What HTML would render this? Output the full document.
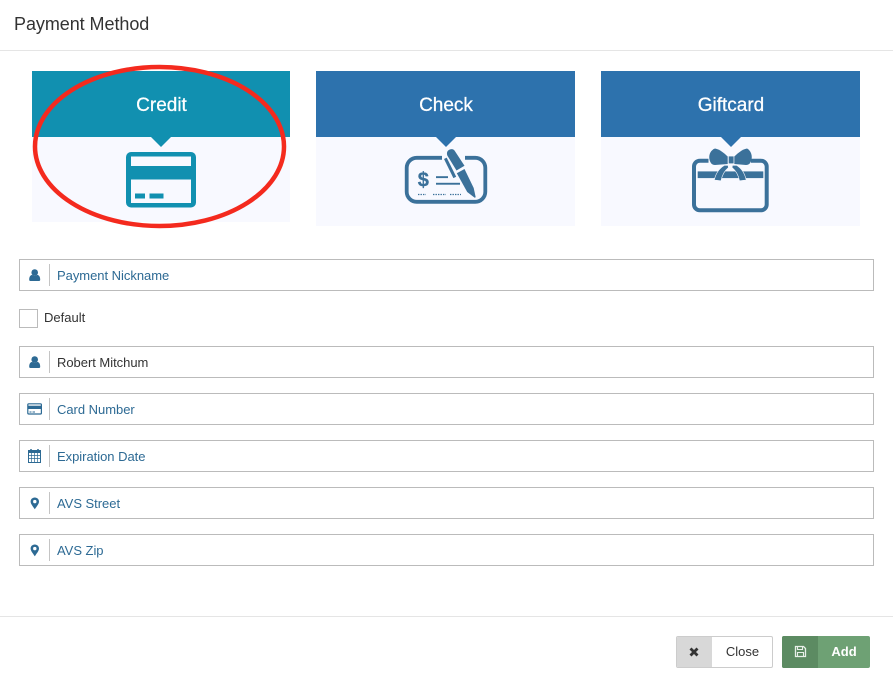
<!DOCTYPE html>
<html>
<head>
<meta charset="utf-8">
<style>
html,body{margin:0;padding:0;background:#fff}
body{width:893px;height:688px;position:relative;overflow:hidden;font-family:"Liberation Sans",Arial,sans-serif;color:#333}
.a{position:absolute}
.title{left:14px;top:14px;font-size:18px;line-height:20px;color:#333;letter-spacing:-.06px}
.line{left:0;width:893px;height:1px;background:#e5e5e5}
.card{top:71px;background:#f8f9ff}
.head{left:0;top:0;width:100%;height:66px;color:#fff;font-size:19px;line-height:69px;text-align:center;-webkit-text-stroke:.25px #fff;text-indent:1px}
.field{left:19px;width:853px;height:30px;border:1px solid #bbb;background:#fff}
.field i{position:absolute;left:29px;top:4px;width:1px;height:22px;background:#c4c4c4}
.field span{position:absolute;left:37px;top:1px;line-height:30px;font-size:13px;color:#2d6a94;letter-spacing:-.03px}
.field span.v{color:#333}
.field svg{position:absolute;left:0;top:0}
.cb{left:19px;top:309px;width:17px;height:17px;border:1px solid #bbb}
.lbl{left:44px;top:310px;font-size:13px;line-height:16px;color:#333}
.btn{top:636px;height:32px;box-sizing:border-box;border-radius:2px;font-size:13px;line-height:30px;text-align:center;overflow:hidden}
</style>
</head>
<body>
<div class="a title">Payment Method</div>
<div class="a line" style="top:50px"></div>

<div class="a card" style="left:32px;width:258px;height:151px"><div class="a head" style="background:#1190b0">Credit</div></div>
<div class="a card" style="left:316px;width:259px;height:155px"><div class="a head" style="background:#2d72ad">Check</div></div>
<div class="a card" style="left:601px;width:259px;height:155px"><div class="a head" style="background:#2d72ad">Giftcard</div></div>

<svg class="a" style="left:0;top:0" width="893" height="240" viewBox="0 0 893 240">
  <path d="M151 137h20l-10 10z" fill="#1190b0"/>
  <path d="M436 137h20l-10 10z" fill="#2d72ad"/>
  <path d="M721 137h20l-10 10z" fill="#2d72ad"/>

  <!-- credit card -->
  <rect x="126" y="152" width="70" height="55.500" rx="5" fill="#1190b0"/>
  <rect x="131" y="156.500" width="60" height="9.500" fill="#f8f9ff"/>
  <rect x="131" y="179.500" width="60" height="23.500" fill="#f8f9ff"/>
  <rect x="135" y="193.500" width="10" height="5" fill="#1190b0"/>
  <rect x="149.500" y="193.500" width="14" height="5" fill="#1190b0"/>

  <!-- check -->
  <path d="M442 157.800h-25.300a10 10 0 0 0-10 10v24a10 10 0 0 0 10 10h58.600a10 10 0 0 0 10-10v-24a10 10 0 0 0-10-10h-10.300" fill="none" stroke="#3b719a" stroke-width="3.800"/>
  <path d="M447.300 155.500c-1-3.200.3-5.200 2.500-6 2.300-.8 4-.2 5.200 1.700l9.500 14.500-8 4.800z" fill="#3b719a"/>
  <path d="M444 159l2.700-1.400 9.500 19.200-2.800 1.300z" fill="#3b719a"/>
  <path d="M456.800 173.300l7.700-4.300 9.200 19 2 9.200-1 .6-7.500-5.800z" fill="#3b719a"/>
  <text x="417.800" y="186.500" font-family="Liberation Sans" font-weight="bold" font-size="20" fill="#3b719a" stroke="#3b719a" stroke-width=".3">$</text>
  <rect x="436" y="176.200" width="12" height="1.900" fill="#3b719a"/>
  <rect x="436" y="182.800" width="24" height="1.900" fill="#3b719a"/>
  <path d="M418 194.500h8M433 194.500h13M450 194.500h11" stroke="#3b719a" stroke-width="1.300" stroke-dasharray="1.400 1.100" fill="none"/>

  <!-- gift -->
  <path d="M708.500 160.700h-8.700a5.800 5.800 0 0 0-5.800 5.800v38a5.800 5.800 0 0 0 5.800 5.800h61.100a5.800 5.800 0 0 0 5.800-5.800v-38a5.800 5.800 0 0 0-5.800-5.800h-9.900" fill="none" stroke="#3b719a" stroke-width="4"/>
  <rect x="697.700" y="171.400" width="65.600" height="6.700" fill="#3b719a"/>
  <path d="M727.700 156.500C724 153 720 149.500 715 148.500C711 150 708.800 154 709.300 158.500C710 163 712 165 715 165L727.700 164Z" fill="#3b719a"/>
  <path d="M734.300 156.500C738 153 742 149.500 747 148.500C750 150 752.200 154 751.700 158.500C751 163 749 165 746 165L734.300 164Z" fill="#3b719a"/>
  <rect x="728.700" y="156.400" width="4.900" height="7" fill="#3b719a"/>
  <path d="M724.500 165.300c-5 3-8.700 8-10.200 14.700l6.700.8c1-5.500 3.500-10 7.500-13.300l-.5-2.200z" fill="#3b719a" stroke="#f8f9ff" stroke-width=".6"/>
  <path d="M736.500 165.300c5 3 8.200 8 9.700 14.700l-6.700.8c-1-5.500-3.500-10-7.500-13.300l.5-2.200z" fill="#3b719a" stroke="#f8f9ff" stroke-width=".6"/>

  <!-- red ellipse -->
  <ellipse cx="159.500" cy="146.500" rx="124.500" ry="79.500" fill="none" stroke="#f42a1e" stroke-width="4.500"/>
</svg>

<div class="a field" style="top:259px"><i></i><span>Payment Nickname</span>
  <svg width="30" height="30"><circle cx="14.700" cy="12.500" r="3.300" fill="#2d6a94"/><path d="M10.300 21c-.7 0-1.100-.5-1.100-1.200 0-2.800.9-4.600 3-4.900 1.500 1.100 3.500 1.100 5 0 2.100.3 3 2.100 3 4.900 0 .7-.4 1.200-1.100 1.200z" fill="#2d6a94"/></svg></div>

<div class="a cb"></div>
<div class="a lbl">Default</div>

<div class="a field" style="top:346px"><i></i><span class="v">Robert Mitchum</span>
  <svg width="30" height="30"><circle cx="14.700" cy="12.500" r="3.300" fill="#2d6a94"/><path d="M10.300 21c-.7 0-1.100-.5-1.100-1.200 0-2.800.9-4.600 3-4.900 1.500 1.100 3.500 1.100 5 0 2.100.3 3 2.100 3 4.900 0 .7-.4 1.200-1.100 1.200z" fill="#2d6a94"/></svg></div>

<div class="a field" style="top:393px"><i></i><span>Card Number</span>
  <svg width="30" height="30"><rect x="7.800" y="9.800" width="13.600" height="10.200" rx="1" fill="none" stroke="#2d6a94" stroke-width="1.200"/><rect x="7.500" y="11.700" width="14" height="3.300" fill="#2d6a94"/><path d="M9.500 18h2M12.500 18h2.500" stroke="#2d6a94" stroke-width="1"/></svg></div>

<div class="a field" style="top:440px"><i></i><span>Expiration Date</span>
  <svg width="30" height="30"><rect x="8.500" y="9.500" width="12" height="12" fill="none" stroke="#2d6a94"/><rect x="8.500" y="9.500" width="12" height="2.500" fill="#2d6a94"/><path d="M11.500 12v9M14.500 12v9M17.500 12v9M8.500 14.500h12M8.500 17.500h12" stroke="#2d6a94" stroke-width=".7"/><path d="M11 8v3M18 8v3" stroke="#2d6a94" stroke-width="1.500"/></svg></div>

<div class="a field" style="top:487px"><i></i><span>AVS Street</span>
  <svg width="30" height="30"><path fill-rule="evenodd" d="M14.800 9.500c2.400 0 4.200 1.800 4.200 4.100 0 2.300-2.500 5-4.200 7.700-1.700-2.700-4.200-5.400-4.200-7.700 0-2.300 1.800-4.100 4.200-4.100zm0 2.400a1.700 1.700 0 1 0 0 3.400 1.700 1.700 0 0 0 0-3.400z" fill="#2d6a94"/></svg></div>

<div class="a field" style="top:534px"><i></i><span>AVS Zip</span>
  <svg width="30" height="30"><path fill-rule="evenodd" d="M14.800 9.500c2.400 0 4.200 1.800 4.200 4.100 0 2.300-2.500 5-4.200 7.700-1.700-2.700-4.200-5.400-4.200-7.700 0-2.300 1.800-4.100 4.200-4.100zm0 2.400a1.700 1.700 0 1 0 0 3.400 1.700 1.700 0 0 0 0-3.400z" fill="#2d6a94"/></svg></div>

<div class="a line" style="top:616px"></div>

<div class="a btn" style="left:676px;width:97px;border:1px solid #ccc;background:#fff;color:#333">
  <div class="a" style="left:0;top:0;width:35px;height:30px;background:#d8d8d8"></div>
  <div class="a" style="left:35px;top:0;width:61px;height:30px;line-height:29px">Close</div>
  <svg class="a" style="left:11px;top:9px" width="13" height="12"><path d="M2.500 2.500l7 7M9.500 2.500l-7 7" stroke="#333" stroke-width="2.800"/></svg>
</div>
<div class="a btn" style="left:782px;width:88px;background:#6ea174;color:#fff;font-weight:bold">
  <div class="a" style="left:0;top:0;width:36px;height:32px;background:#5c8b62"></div>
  <div class="a" style="left:36px;top:1px;width:52px;height:32px;line-height:30px">Add</div>
  <svg class="a" style="left:12px;top:9px" width="13" height="13"><path d="M1.500 1.500h8l2 2v8h-10z" fill="none" stroke="#e8efe9" stroke-width="1.300"/><path d="M3.500 1.500h5v3h-5zM3.500 11.500v-4h6v4" fill="none" stroke="#e8efe9" stroke-width="1.100"/></svg>
</div>
</body>
</html>
